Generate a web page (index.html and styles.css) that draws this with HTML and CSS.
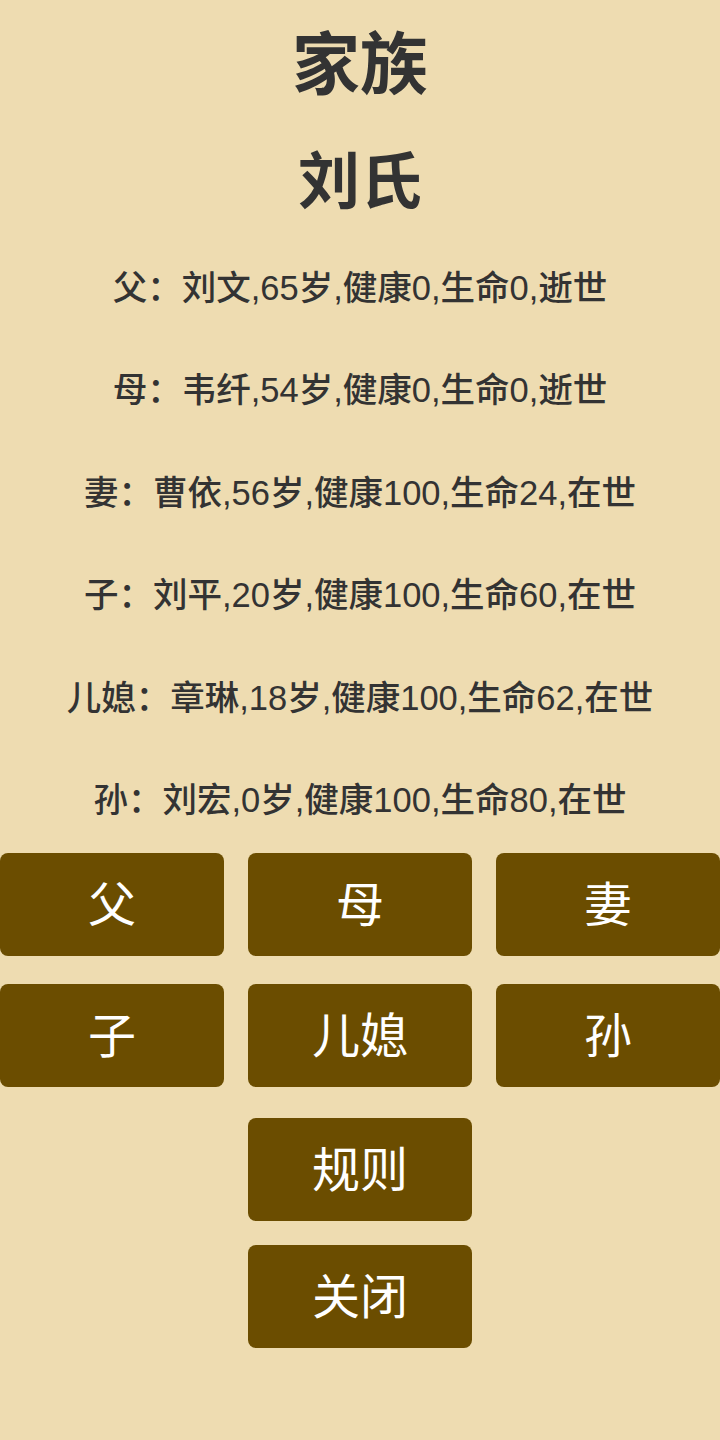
FILE: index.html
```html
<!DOCTYPE html>
<html lang="zh-CN">
<head>
<meta charset="utf-8">
<title>家族</title>
<link rel="stylesheet" href="styles.css">
</head>
<body>
<div class="page">
  <header class="header">
    <h1 class="title">家族</h1>
    <h2 class="surname">刘氏</h2>
  </header>
  <ul class="members">
    <li class="member">父：刘文,65岁,健康0,生命0,逝世</li>
    <li class="member">母：韦纤,54岁,健康0,生命0,逝世</li>
    <li class="member">妻：曹依,56岁,健康100,生命24,在世</li>
    <li class="member">子：刘平,20岁,健康100,生命60,在世</li>
    <li class="member">儿媳：章琳,18岁,健康100,生命62,在世</li>
    <li class="member">孙：刘宏,0岁,健康100,生命80,在世</li>
  </ul>
  <div class="grid">
    <button class="btn">父</button>
    <button class="btn">母</button>
    <button class="btn">妻</button>
    <button class="btn">子</button>
    <button class="btn">儿媳</button>
    <button class="btn">孙</button>
  </div>
  <div class="actions">
    <button class="btn">规则</button>
    <button class="btn">关闭</button>
  </div>
</div>
</body>
</html>
```
FILE: styles.css
```css
html, body {
  margin: 0;
  padding: 0;
  background: #eedcb1;
}
body {
  font-family: "Liberation Sans", "Noto Sans CJK SC", sans-serif;
  color: #333333;
  width: 720px;
  height: 1440px;
}
.page {
  display: flex;
  flex-direction: column;
}
.header {
  display: flex;
  flex-direction: column;
  align-items: center;
}
.title {
  margin: 0;
  height: 130px;
  line-height: 130px;
  font-size: 68px;
  font-weight: bold;
}
.surname {
  margin: 0;
  height: 106px;
  line-height: 106px;
  font-size: 62px;
  font-weight: bold;
}
.members {
  list-style: none;
  margin: 0;
  padding: 0;
}
.member {
  height: 102.4px;
  line-height: 104px;
  text-align: center;
  font-size: 34.5px;
  font-weight: 500;
}
.grid {
  margin-top: 3px;
  display: grid;
  grid-template-columns: 224px 224px 224px;
  column-gap: 24px;
  row-gap: 28px;
}
.btn {
  height: 103px;
  width: 224px;
  border: none;
  border-radius: 8px;
  background: #6b4d00;
  color: #ffffff;
  font-family: "Liberation Sans", "Noto Sans CJK SC", sans-serif;
  font-size: 48px;
  padding: 0 0 7px 0;
  margin: 0;
}
.actions {
  margin-top: 31px;
  display: flex;
  flex-direction: column;
  align-items: center;
  gap: 24px;
}
```
